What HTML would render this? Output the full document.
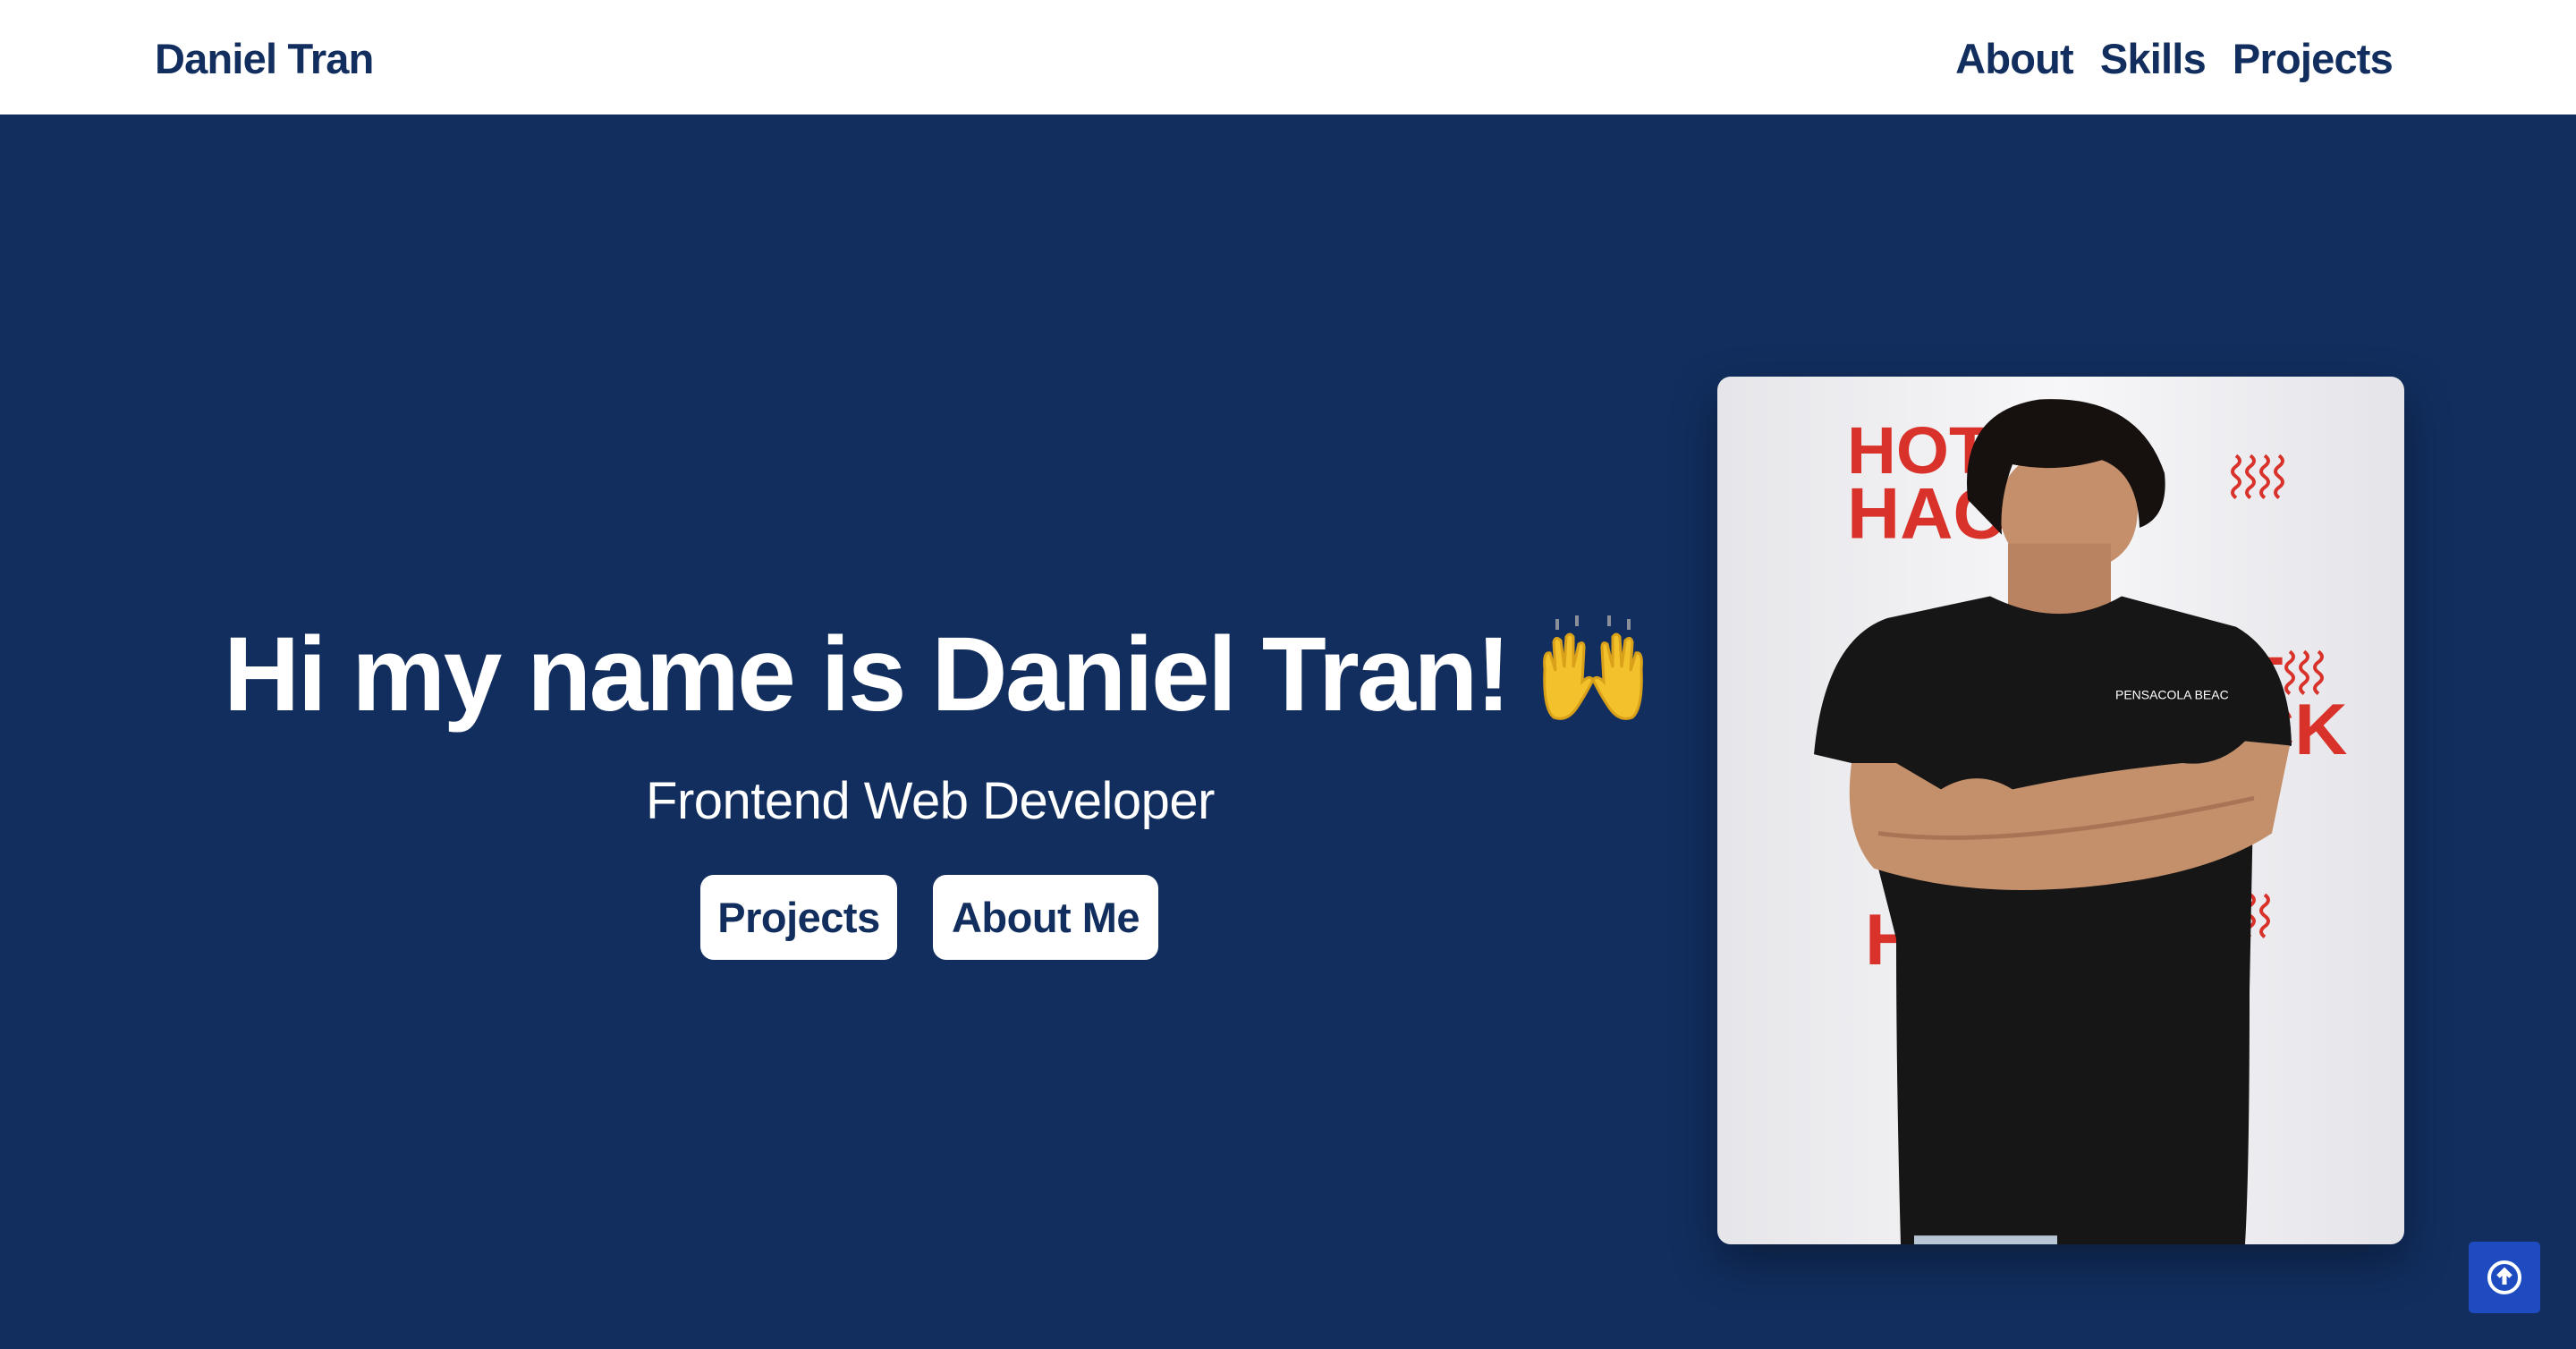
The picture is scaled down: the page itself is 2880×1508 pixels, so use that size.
<!DOCTYPE html>
<html><head><meta charset="utf-8">
<style>
*{margin:0;padding:0;box-sizing:border-box}
html,body{width:2880px;height:1508px;overflow:hidden;background:#112e5e;font-family:"Liberation Sans",sans-serif}
.nav{position:absolute;left:0;top:0;width:2880px;height:128px;background:#fff}
.nav .brand{position:absolute;left:173px;top:38px;font-size:47px;font-weight:bold;color:#112e5e;letter-spacing:-0.8px}
.nav .links{position:absolute;right:205px;top:38px;font-size:47px;font-weight:bold;color:#112e5e;letter-spacing:-0.8px}
.nav .links span{margin-left:30px}
.hero{position:absolute;left:0;top:128px;width:2880px;height:1380px;background:#112e5e}
h1{position:absolute;left:250px;top:684px;font-size:118px;font-weight:bold;color:#fff;letter-spacing:-2.5px;white-space:nowrap;line-height:140px}
.sub{position:absolute;left:0;width:2080px;top:862px;text-align:center;font-size:58px;color:#fff;letter-spacing:-0.5px}
.btn{position:absolute;top:978px;height:95px;background:#fff;border-radius:15px;color:#112e5e;font-weight:bold;font-size:47px;text-align:center;line-height:95px;letter-spacing:-0.5px}
.photo{position:absolute;left:1920px;top:421px;width:768px;height:970px;border-radius:15px;overflow:hidden;box-shadow:0 20px 50px rgba(0,0,0,.35)}
.up{position:absolute;left:2760px;top:1388px;width:80px;height:80px;background:#1e4bbf;border-radius:5px}
</style></head><body>
<div class="nav"><div class="brand">Daniel Tran</div><div class="links"><span>About</span><span>Skills</span><span>Projects</span></div></div>
<div class="hero"></div>
<h1>Hi my name is Daniel Tran! <svg width="128" height="124" viewBox="0 0 128 124" style="vertical-align:-18px">
<g fill="#f3c12b" stroke="#d9a01a" stroke-width="3">
<path d="M10 60 Q8 40 16 42 L22 62 L20 30 Q22 22 28 28 L32 58 L34 24 Q38 18 42 24 L42 58 L48 32 Q54 28 54 36 L52 74 Q60 66 64 72 Q56 88 48 100 Q36 120 20 114 Q8 104 10 60Z"/>
<path d="M118 60 Q120 40 112 42 L106 62 L108 30 Q106 22 100 28 L96 58 L94 24 Q90 18 86 24 L86 58 L80 32 Q74 28 74 36 L76 74 Q68 66 64 72 Q72 88 80 100 Q92 120 108 114 Q120 104 118 60Z"/>
</g><g fill="#8a8f99"><rect x="22" y="4" width="4" height="12"/><rect x="44" y="0" width="4" height="12"/><rect x="80" y="0" width="4" height="12"/><rect x="102" y="4" width="4" height="12"/></g></svg></h1>
<div class="sub">Frontend Web Developer</div>
<div class="btn" style="left:783px;width:220px">Projects</div>
<div class="btn" style="left:1043px;width:252px">About Me</div>
<div class="photo"><svg width="768" height="970" viewBox="0 0 768 988" preserveAspectRatio="none">
<defs><linearGradient id="bg" x1="0" x2="1"><stop offset="0" stop-color="#e6e6ea"/><stop offset=".5" stop-color="#f7f7f9"/><stop offset="1" stop-color="#e4e4e9"/></linearGradient></defs>
<rect width="768" height="988" fill="url(#bg)"/>
<g fill="#d9322b" font-family="Liberation Sans" font-weight="bold">
<text x="145" y="110" font-size="76">HOT</text>
<text x="145" y="184" font-size="82">HAC</text>
<text x="586" y="372" font-size="76">T</text>
<text x="586" y="430" font-size="82">CK</text>
<text x="165" y="669" font-size="82">H</text>
</g>
<g fill="none" stroke="#d9322b" stroke-width="4">
<path d="M580 90 q8 6 0 12 q-8 6 0 12 q8 6 0 12 q-8 6 0 12 M596 90 q8 6 0 12 q-8 6 0 12 q8 6 0 12 q-8 6 0 12 M612 90 q8 6 0 12 q-8 6 0 12 q8 6 0 12 q-8 6 0 12 M628 90 q8 6 0 12 q-8 6 0 12 q8 6 0 12 q-8 6 0 12"/>
<path d="M640 313 q8 6 0 12 q-8 6 0 12 q8 6 0 12 q-8 6 0 12 M656 313 q8 6 0 12 q-8 6 0 12 q8 6 0 12 q-8 6 0 12 M672 313 q8 6 0 12 q-8 6 0 12 q8 6 0 12 q-8 6 0 12"/>
<path d="M580 590 q8 6 0 12 q-8 6 0 12 q8 6 0 12 q-8 6 0 12 M596 590 q8 6 0 12 q-8 6 0 12 q8 6 0 12 q-8 6 0 12 M612 590 q8 6 0 12 q-8 6 0 12 q8 6 0 12 q-8 6 0 12"/>
</g>
<path d="M315 150 Q318 90 390 80 Q468 90 470 150 Q470 220 392 222 Q318 220 315 150Z" fill="#c68f6c"/>
<path d="M325 190 L325 280 L440 280 L440 190Z" fill="#b98261"/>
<path d="M280 140 Q270 40 360 26 Q470 20 500 110 Q505 160 472 172 Q470 110 430 95 Q380 110 330 100 Q315 140 318 180 Z" fill="#16110f"/>
<path d="M108 430 Q120 300 190 275 L305 250 Q385 290 452 250 L580 285 Q640 320 642 420 L600 440 L595 700 Q595 900 590 988 L205 988 Q200 800 200 640 L150 440 Z" fill="#161616"/>
<path d="M150 440 Q140 520 175 560 Q300 600 460 575 Q560 560 620 520 L640 420 L590 415 Q560 445 520 440 Q420 450 330 470 Q290 445 250 470 L200 440Z" fill="#c4906c"/>
<path d="M180 520 Q330 540 600 480" stroke="#a87455" stroke-width="5" fill="none"/>
<text x="445" y="367" font-size="14" fill="#fff" font-family="Liberation Sans">PENSACOLA BEAC</text>
<rect x="220" y="978" width="160" height="10" fill="#b8c6d6"/>
</svg></div>
<div class="up"><svg width="80" height="80" viewBox="0 0 80 80"><circle cx="40" cy="40" r="17" fill="none" stroke="#fff" stroke-width="4"/><path d="M40 48 V33 M33 39 L40 32 L47 39" stroke="#fff" stroke-width="5" fill="none"/></svg></div>
</body></html>
